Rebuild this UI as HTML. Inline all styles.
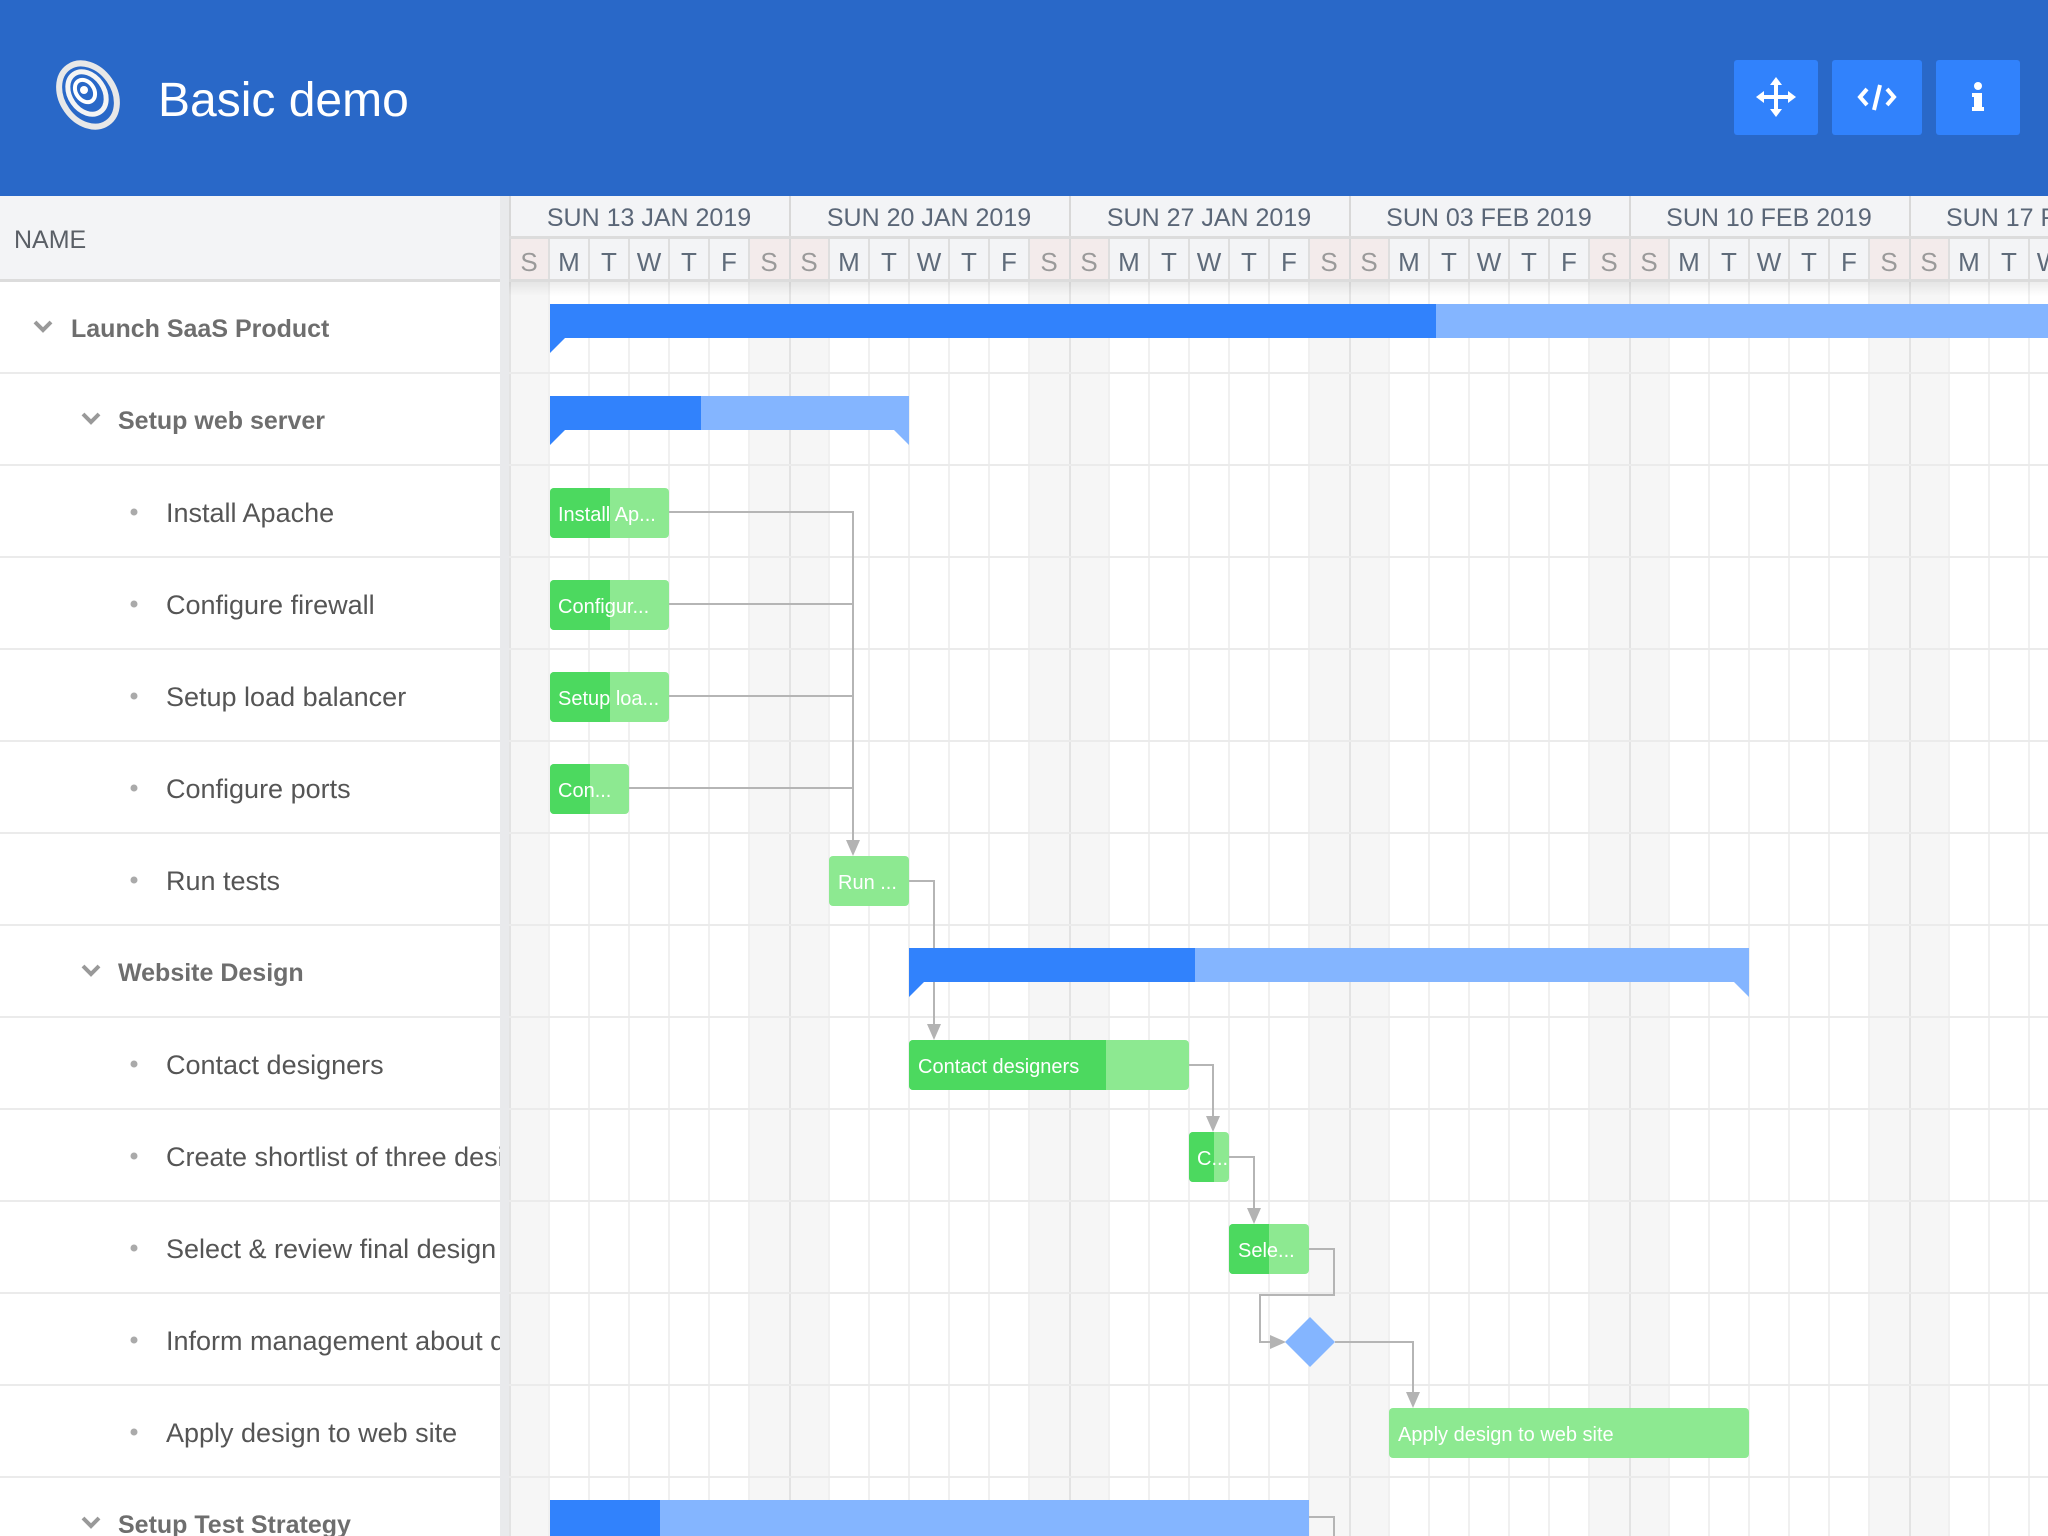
<!DOCTYPE html>
<html><head><meta charset="utf-8">
<style>
*{margin:0;padding:0;box-sizing:border-box}
body{width:2048px;height:1536px;overflow:hidden;background:#fff;font-family:"Liberation Sans",sans-serif;position:relative}
.top{position:absolute;left:0;top:0;width:2048px;height:196px;background:#2968c8}
.title{position:absolute;left:158px;top:71px;font-size:48px;color:#fff;line-height:60px}
.btn{position:absolute;top:60px;height:75px;background:#3182fc;border-radius:3px}
.left{position:absolute;left:0;top:196px;width:500px;height:1340px;overflow:hidden;background:#fff}
.lh{position:absolute;left:0;top:0;width:500px;height:86px;background:#f3f4f6;border-bottom:3px solid #dcdcdc}
.lh span{position:absolute;left:14px;top:30px;font-size:25px;color:#5a5f66}
.row{position:absolute;left:0;width:500px;height:92px;border-bottom:2px solid #ebebeb;white-space:nowrap;overflow:hidden}
.row span{position:absolute;top:31px;font-size:27px;line-height:32px}
.row span.b0{font-size:25px;font-weight:bold;color:#6e6e6e}
.n{color:#555}
.split{position:absolute;left:500px;top:196px;width:9px;height:1340px;background:#e9eaec}
svg text{font-family:"Liberation Sans",sans-serif}
</style></head><body>
<div class="top">
<svg style="position:absolute;left:48px;top:57px" width="80" height="76" viewBox="0 0 80 76">
<g fill="none" stroke-linecap="round">
<ellipse cx="40" cy="38" rx="34" ry="26" transform="rotate(55 40 38)" stroke="#e8e8e8" stroke-width="6"/>
<ellipse cx="39" cy="36" rx="23" ry="17" transform="rotate(55 39 36)" stroke="#f4f4f4" stroke-width="5"/>
<ellipse cx="37" cy="34" rx="12" ry="9" transform="rotate(55 37 34)" stroke="#fff" stroke-width="4"/>
<circle cx="36" cy="33" r="4" fill="#fff"/>
</g></svg>
<div class="title">Basic demo</div>
<div class="btn" style="left:1734px;width:84px">
<svg width="84" height="75" viewBox="0 0 84 75"><g fill="#fff"><rect x="40" y="22" width="4" height="30"/><rect x="27" y="35" width="30" height="4"/><polygon points="42,17 36,25 48,25"/><polygon points="42,57 36,49 48,49"/><polygon points="22,37 30,31 30,43"/><polygon points="62,37 54,31 54,43"/></g></svg></div>
<div class="btn" style="left:1832px;width:90px">
<svg width="90" height="75" viewBox="0 0 90 75"><g fill="none" stroke="#fff" stroke-width="4"><polyline points="35,29 28,37 35,45"/><polyline points="55,29 62,37 55,45"/><line x1="48" y1="25" x2="42" y2="50"/></g></svg></div>
<div class="btn" style="left:1936px;width:84px">
<svg width="84" height="75" viewBox="0 0 84 75"><g fill="#fff"><circle cx="42" cy="26" r="4"/><rect x="38" y="33" width="8" height="17"/><rect x="36" y="47" width="12" height="4"/><rect x="36" y="33" width="6" height="4"/></g></svg></div>
</div>

<div class="left">
<div class="lh"><span>NAME</span></div>
<div class="row" style="top:86px"><svg style="position:absolute;left:32px;top:37px" width="22" height="16"><polyline points="3,3 11,11 19,3" fill="none" stroke="#999" stroke-width="4"/></svg><span class="b0" style="left:71px">Launch SaaS Product</span></div>
<div class="row" style="top:178px"><svg style="position:absolute;left:80px;top:37px" width="22" height="16"><polyline points="3,3 11,11 19,3" fill="none" stroke="#999" stroke-width="4"/></svg><span class="b0" style="left:118px">Setup web server</span></div>
<div class="row" style="top:270px"><svg style="position:absolute;left:130px;top:42px" width="8" height="8"><circle cx="4" cy="4" r="3.5" fill="#aaa"/></svg><span class="n" style="left:166px">Install Apache</span></div>
<div class="row" style="top:362px"><svg style="position:absolute;left:130px;top:42px" width="8" height="8"><circle cx="4" cy="4" r="3.5" fill="#aaa"/></svg><span class="n" style="left:166px">Configure firewall</span></div>
<div class="row" style="top:454px"><svg style="position:absolute;left:130px;top:42px" width="8" height="8"><circle cx="4" cy="4" r="3.5" fill="#aaa"/></svg><span class="n" style="left:166px">Setup load balancer</span></div>
<div class="row" style="top:546px"><svg style="position:absolute;left:130px;top:42px" width="8" height="8"><circle cx="4" cy="4" r="3.5" fill="#aaa"/></svg><span class="n" style="left:166px">Configure ports</span></div>
<div class="row" style="top:638px"><svg style="position:absolute;left:130px;top:42px" width="8" height="8"><circle cx="4" cy="4" r="3.5" fill="#aaa"/></svg><span class="n" style="left:166px">Run tests</span></div>
<div class="row" style="top:730px"><svg style="position:absolute;left:80px;top:37px" width="22" height="16"><polyline points="3,3 11,11 19,3" fill="none" stroke="#999" stroke-width="4"/></svg><span class="b0" style="left:118px">Website Design</span></div>
<div class="row" style="top:822px"><svg style="position:absolute;left:130px;top:42px" width="8" height="8"><circle cx="4" cy="4" r="3.5" fill="#aaa"/></svg><span class="n" style="left:166px">Contact designers</span></div>
<div class="row" style="top:914px"><svg style="position:absolute;left:130px;top:42px" width="8" height="8"><circle cx="4" cy="4" r="3.5" fill="#aaa"/></svg><span class="n" style="left:166px">Create shortlist of three designers</span></div>
<div class="row" style="top:1006px"><svg style="position:absolute;left:130px;top:42px" width="8" height="8"><circle cx="4" cy="4" r="3.5" fill="#aaa"/></svg><span class="n" style="left:166px">Select &amp; review final design</span></div>
<div class="row" style="top:1098px"><svg style="position:absolute;left:130px;top:42px" width="8" height="8"><circle cx="4" cy="4" r="3.5" fill="#aaa"/></svg><span class="n" style="left:166px">Inform management about decision</span></div>
<div class="row" style="top:1190px"><svg style="position:absolute;left:130px;top:42px" width="8" height="8"><circle cx="4" cy="4" r="3.5" fill="#aaa"/></svg><span class="n" style="left:166px">Apply design to web site</span></div>
<div class="row" style="top:1282px"><svg style="position:absolute;left:80px;top:37px" width="22" height="16"><polyline points="3,3 11,11 19,3" fill="none" stroke="#999" stroke-width="4"/></svg><span class="b0" style="left:118px">Setup Test Strategy</span></div>
</div>
<div class="split"></div>

<svg style="position:absolute;left:509px;top:196px" width="1539" height="1340" viewBox="509 196 1539 1340">
<defs>
<pattern id="wk" x="509" y="0" width="280" height="10" patternUnits="userSpaceOnUse">
<rect x="0" y="0" width="280" height="10" fill="#fff"/>
<rect x="0" y="0" width="40" height="10" fill="#f6f6f6"/>
<rect x="240" y="0" width="40" height="10" fill="#f6f6f6"/>
<rect x="39" y="0" width="2" height="10" fill="#f0f0f0"/>
<rect x="79" y="0" width="2" height="10" fill="#f0f0f0"/>
<rect x="119" y="0" width="2" height="10" fill="#f0f0f0"/>
<rect x="159" y="0" width="2" height="10" fill="#f0f0f0"/>
<rect x="199" y="0" width="2" height="10" fill="#f0f0f0"/>
<rect x="239" y="0" width="2" height="10" fill="#f0f0f0"/>
<rect x="0" y="0" width="2" height="10" fill="#e3e3e3"/>
</pattern>
<pattern id="hd" x="509" y="0" width="280" height="10" patternUnits="userSpaceOnUse">
<rect x="0" y="0" width="280" height="10" fill="#f3f4f6"/>
<rect x="0" y="0" width="40" height="10" fill="#f3ebeb"/>
<rect x="240" y="0" width="40" height="10" fill="#f3ebeb"/>
<rect x="39" y="0" width="2" height="10" fill="#dedede"/>
<rect x="79" y="0" width="2" height="10" fill="#dedede"/>
<rect x="119" y="0" width="2" height="10" fill="#dedede"/>
<rect x="159" y="0" width="2" height="10" fill="#dedede"/>
<rect x="199" y="0" width="2" height="10" fill="#dedede"/>
<rect x="239" y="0" width="2" height="10" fill="#dedede"/>
<rect x="0" y="0" width="2" height="10" fill="#d8d8d8"/>
</pattern>
<pattern id="hw" x="509" y="0" width="280" height="10" patternUnits="userSpaceOnUse">
<rect x="0" y="0" width="280" height="10" fill="#f3f4f6"/>
<rect x="0" y="0" width="2" height="10" fill="#d8d8d8"/>
</pattern>
<linearGradient id="sh" x1="0" y1="0" x2="0" y2="1"><stop offset="0" stop-color="#000" stop-opacity="0.07"/><stop offset="1" stop-color="#000" stop-opacity="0"/></linearGradient>
</defs>
<rect x="509" y="282" width="1539" height="1254" fill="url(#wk)"/>
<g fill="#ebebeb">
<rect x="509" y="372" width="1539" height="2"/><rect x="509" y="464" width="1539" height="2"/><rect x="509" y="556" width="1539" height="2"/><rect x="509" y="648" width="1539" height="2"/><rect x="509" y="740" width="1539" height="2"/><rect x="509" y="832" width="1539" height="2"/><rect x="509" y="924" width="1539" height="2"/><rect x="509" y="1016" width="1539" height="2"/><rect x="509" y="1108" width="1539" height="2"/><rect x="509" y="1200" width="1539" height="2"/><rect x="509" y="1292" width="1539" height="2"/><rect x="509" y="1384" width="1539" height="2"/><rect x="509" y="1476" width="1539" height="2"/>
</g>
<rect x="509" y="196" width="1539" height="42" fill="url(#hw)"/>
<rect x="509" y="238" width="1539" height="44" fill="url(#hd)"/>
<rect x="509" y="236" width="1539" height="3" fill="#dcdcdc"/>
<rect x="509" y="279" width="1539" height="3" fill="#dcdcdc"/>
<rect x="509" y="282" width="1539" height="14" fill="url(#sh)"/>
<g font-size="25" fill="#5a6677" text-anchor="middle">
<text x="649" y="226">SUN 13 JAN 2019</text><text x="929" y="226">SUN 20 JAN 2019</text><text x="1209" y="226">SUN 27 JAN 2019</text><text x="1489" y="226">SUN 03 FEB 2019</text><text x="1769" y="226">SUN 10 FEB 2019</text><text x="1946" y="226" text-anchor="start">SUN 17 FEB 2019</text>
</g>
<g font-size="26" fill="#5f6b7a" text-anchor="middle">
<text x="529" y="271" fill="#9a9a9a">S</text><text x="569" y="271">M</text><text x="609" y="271">T</text><text x="649" y="271">W</text><text x="689" y="271">T</text><text x="729" y="271">F</text><text x="769" y="271" fill="#9a9a9a">S</text>
<text x="809" y="271" fill="#9a9a9a">S</text><text x="849" y="271">M</text><text x="889" y="271">T</text><text x="929" y="271">W</text><text x="969" y="271">T</text><text x="1009" y="271">F</text><text x="1049" y="271" fill="#9a9a9a">S</text>
<text x="1089" y="271" fill="#9a9a9a">S</text><text x="1129" y="271">M</text><text x="1169" y="271">T</text><text x="1209" y="271">W</text><text x="1249" y="271">T</text><text x="1289" y="271">F</text><text x="1329" y="271" fill="#9a9a9a">S</text>
<text x="1369" y="271" fill="#9a9a9a">S</text><text x="1409" y="271">M</text><text x="1449" y="271">T</text><text x="1489" y="271">W</text><text x="1529" y="271">T</text><text x="1569" y="271">F</text><text x="1609" y="271" fill="#9a9a9a">S</text>
<text x="1649" y="271" fill="#9a9a9a">S</text><text x="1689" y="271">M</text><text x="1729" y="271">T</text><text x="1769" y="271">W</text><text x="1809" y="271">T</text><text x="1849" y="271">F</text><text x="1889" y="271" fill="#9a9a9a">S</text>
<text x="1929" y="271" fill="#9a9a9a">S</text><text x="1969" y="271">M</text><text x="2009" y="271">T</text><text x="2049" y="271">W</text>
</g>

<g fill="none" stroke="#b5b5b5" stroke-width="2">
<polyline points="669,512 853,512 853,846"/>
<polyline points="669,604 853,604"/>
<polyline points="669,696 853,696"/>
<polyline points="629,788 853,788"/>
<polyline points="909,881 934,881 934,1030"/>
<polyline points="1189,1065 1213,1065 1213,1122"/>
<polyline points="1229,1157 1254,1157 1254,1214"/>
<polyline points="1309,1249 1334,1249 1334,1295 1260,1295 1260,1342 1275,1342"/>
<polyline points="1335,1342 1413,1342 1413,1398"/>
<polyline points="1309,1517 1334,1517 1334,1536"/>
</g>
<g fill="#b3b3b3">
<polygon points="846,840 860,840 853,856"/>
<polygon points="927,1024 941,1024 934,1040"/>
<polygon points="1206,1116 1220,1116 1213,1132"/>
<polygon points="1247,1208 1261,1208 1254,1224"/>
<polygon points="1270,1335 1270,1349 1286,1342"/>
<polygon points="1406,1392 1420,1392 1413,1408"/>
</g>

<rect x="550" y="304" width="1500" height="34" fill="#84b5ff"/>
<rect x="550" y="304" width="886" height="34" fill="#3182fc"/>
<polygon points="550,337 566,337 550,353" fill="#3182fc"/>

<rect x="550" y="396" width="359" height="34" fill="#84b5ff"/>
<rect x="550" y="396" width="151" height="34" fill="#3182fc"/>
<polygon points="550,429 566,429 550,445" fill="#3182fc"/>
<polygon points="909,429 893,429 909,445" fill="#84b5ff"/>

<rect x="909" y="948" width="840" height="34" fill="#84b5ff"/>
<rect x="909" y="948" width="286" height="34" fill="#3182fc"/>
<polygon points="909,981 925,981 909,997" fill="#3182fc"/>
<polygon points="1749,981 1733,981 1749,997" fill="#84b5ff"/>

<rect x="550" y="1500" width="759" height="36" fill="#84b5ff"/>
<rect x="550" y="1500" width="110" height="36" fill="#3182fc"/>

<g>
<rect x="550" y="488" width="119" height="50" rx="4" fill="#8de991"/>
<path d="M554 488H610V538H554A4 4 0 0 1 550 534V492A4 4 0 0 1 554 488Z" fill="#4cd95f"/>
<rect x="550" y="580" width="119" height="50" rx="4" fill="#8de991"/>
<path d="M554 580H610V630H554A4 4 0 0 1 550 626V584A4 4 0 0 1 554 580Z" fill="#4cd95f"/>
<rect x="550" y="672" width="119" height="50" rx="4" fill="#8de991"/>
<path d="M554 672H610V722H554A4 4 0 0 1 550 718V676A4 4 0 0 1 554 672Z" fill="#4cd95f"/>
<rect x="550" y="764" width="79" height="50" rx="4" fill="#8de991"/>
<path d="M554 764H590V814H554A4 4 0 0 1 550 810V768A4 4 0 0 1 554 764Z" fill="#4cd95f"/>
<rect x="829" y="856" width="80" height="50" rx="4" fill="#8de991"/>
<rect x="909" y="1040" width="280" height="50" rx="4" fill="#8de991"/>
<path d="M913 1040H1106V1090H913A4 4 0 0 1 909 1086V1044A4 4 0 0 1 913 1040Z" fill="#4cd95f"/>
<rect x="1189" y="1132" width="40" height="50" rx="4" fill="#8de991"/>
<path d="M1193 1132H1214V1182H1193A4 4 0 0 1 1189 1178V1136A4 4 0 0 1 1193 1132Z" fill="#4cd95f"/>
<rect x="1229" y="1224" width="80" height="50" rx="4" fill="#8de991"/>
<path d="M1233 1224H1269V1274H1233A4 4 0 0 1 1229 1270V1228A4 4 0 0 1 1233 1224Z" fill="#4cd95f"/>
<rect x="1389" y="1408" width="360" height="50" rx="4" fill="#8de991"/>
<polygon points="1310,1317 1335,1342 1310,1367 1285,1342" fill="#84b5ff"/>
</g>
<g font-size="20" fill="#fff">
<text x="558" y="521">Install Ap...</text>
<text x="558" y="613">Configur...</text>
<text x="558" y="705">Setup loa...</text>
<text x="558" y="797">Con...</text>
<text x="838" y="889">Run ...</text>
<text x="918" y="1073">Contact designers</text>
<text x="1197" y="1165">C...</text>
<text x="1238" y="1257">Sele...</text>
<text x="1398" y="1441">Apply design to web site</text>
</g>
</svg>
</body></html>
